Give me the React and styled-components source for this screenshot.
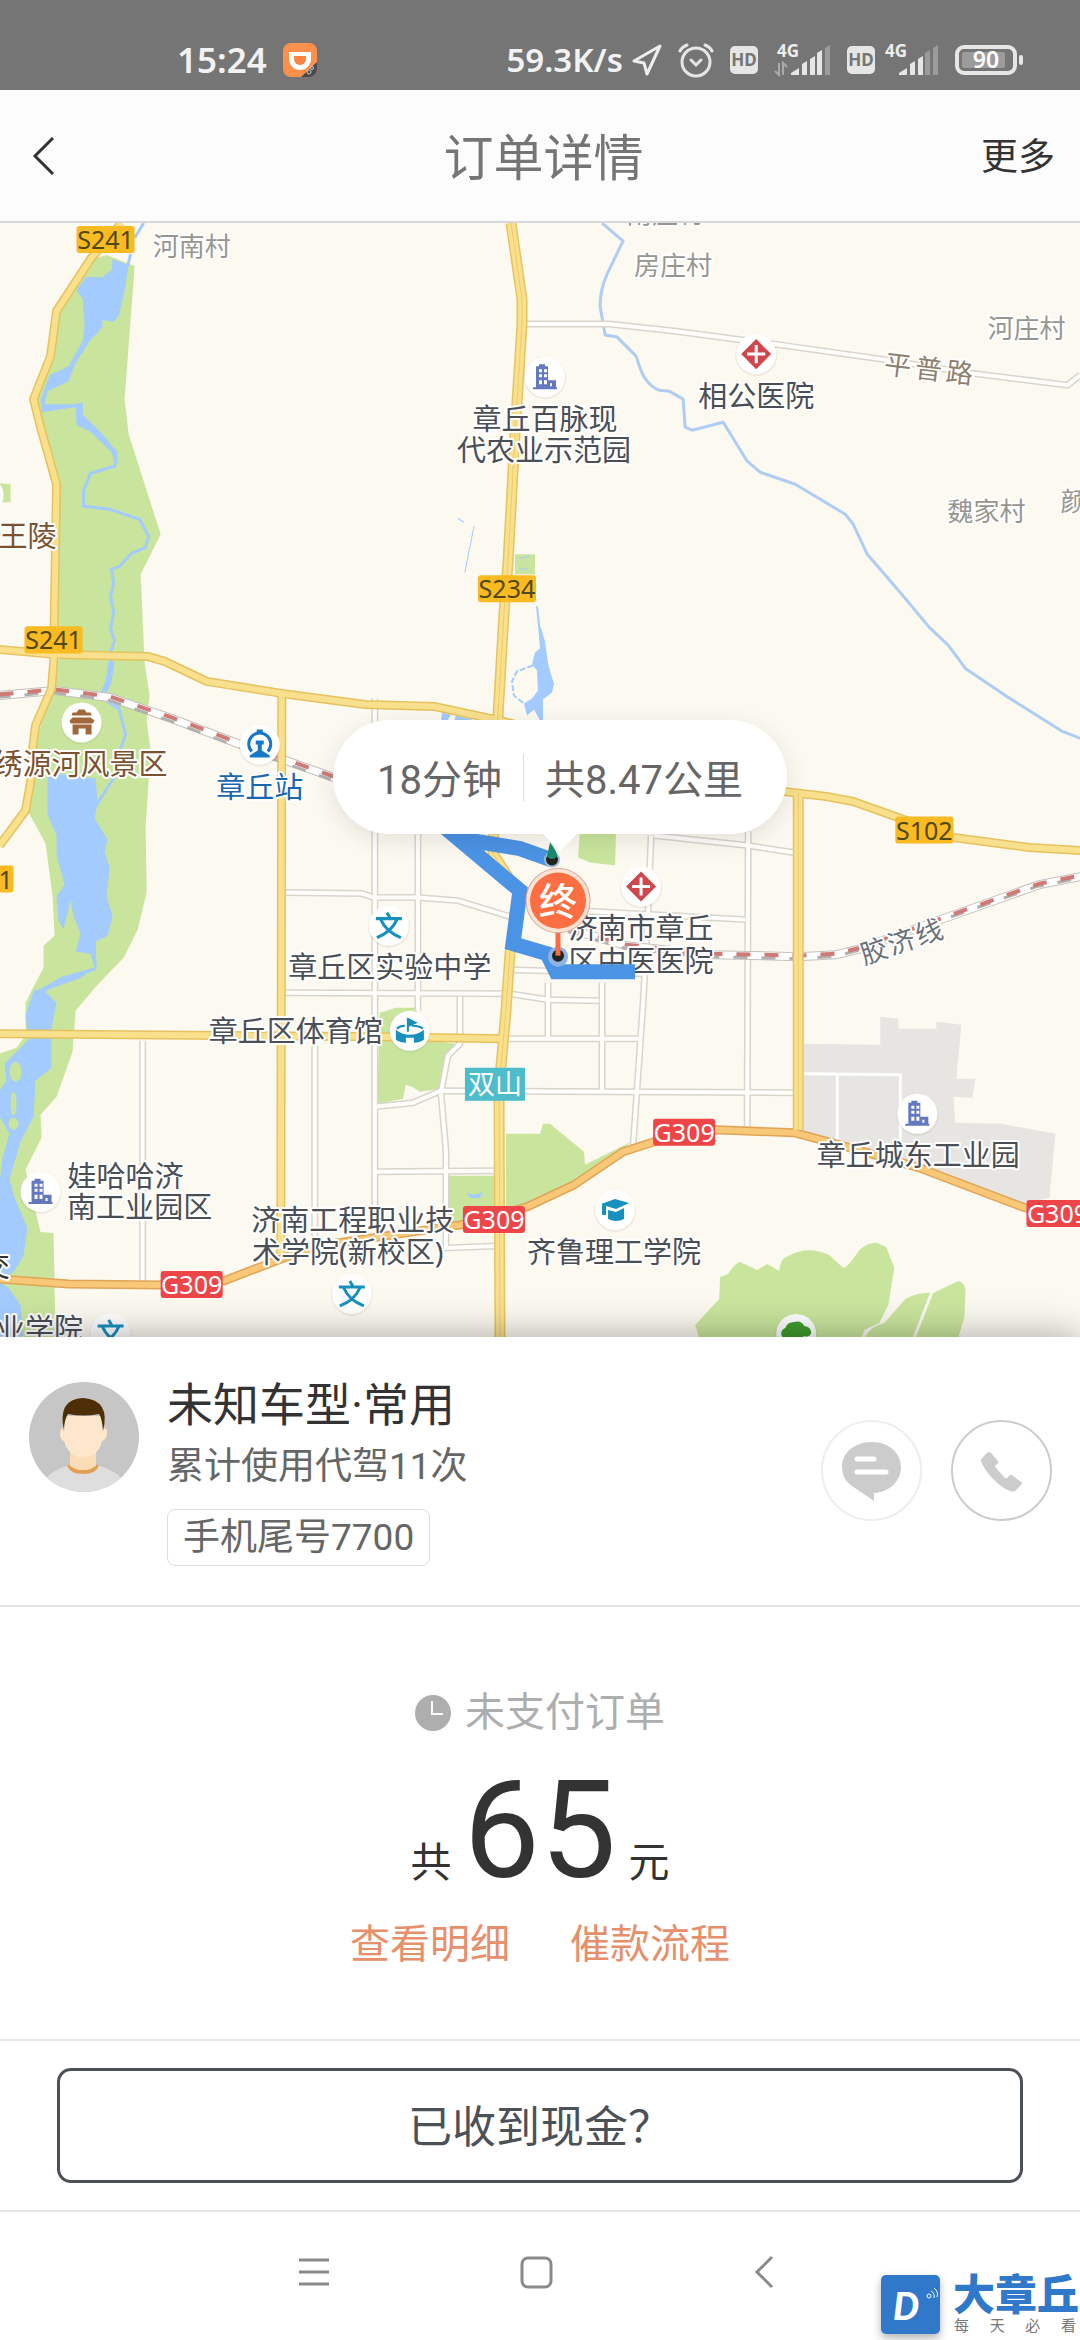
import React from "react";
import styled, { createGlobalStyle } from "styled-components";

const GlobalStyle = createGlobalStyle`
  * {
    box-sizing: border-box;
  }
  body {
    margin: 0;
    background: #fff;
    color: #333;
    font-family: Roboto, "Noto Sans CJK SC", sans-serif;
  }
  button {
    padding: 0;
    border: 0;
    background: none;
    color: inherit;
    font-family: inherit;
    cursor: pointer;
  }
  svg {
    display: block;
    flex: none;
  }
`;

const Page = styled.div`
  display: flex;
  flex-direction: column;
  min-height: 100vh;
  position: relative;
  overflow: hidden;
`;

const StatusBar = styled.div`
  display: flex;
  align-items: center;
  height: 90px;
  padding: 30px 57px 0 177px;
  background: #757575;
  color: #f2f2f2;
  font-family: "Noto Sans", sans-serif;
  font-size: 35px;
  font-weight: 600;
  line-height: 40px;
`;

const StatusIcons = styled.div`
  display: flex;
  align-items: center;
  gap: 16px;
  margin-left: auto;
  font-size: 33px;
`;

const Speed = styled.div`
  display: flex;
  align-items: center;
  gap: 9px;
`;

const Network = styled.div`
  display: flex;
  align-items: center;
  gap: 10px;
`;

const Time = styled.span`
  margin-right: 16px;
`;

const Header = styled.header`
  display: grid;
  grid-template-columns: 1fr auto 1fr;
  align-items: center;
  height: 133px;
  padding: 0 25px 0 32px;
  background: #fcfcfd;
  border-bottom: 2px solid #d6d8da;
`;

const Title = styled.h1`
  margin: 0;
  padding-top: 6px;
  color: #757575;
  font-size: 50px;
  font-weight: 400;
  line-height: 60px;
`;

const BackButton = styled.button`
  justify-self: start;
`;

const MoreButton = styled.button`
  justify-self: end;
  padding-top: 4px;
  font-size: 37px;
  line-height: 60px;
`;

const MapArea = styled.section`
  position: relative;
  flex: 1;
  min-height: 600px;
  overflow: hidden;
  background: #fcf9f1;
`;

const MapSvg = styled.svg`
  position: absolute;
  inset: 0;
  width: 100%;
  height: 100%;
`;

const MapText = styled.text`
  font-family: "Noto Sans", "Noto Sans CJK SC", sans-serif;
  font-size: ${(p) => p.$size || 29}px;
  fill: ${(p) => p.$color || "#4a4e55"};
  stroke: #fff;
  stroke-width: ${(p) => (p.$plain ? 0 : 4)}px;
  stroke-linejoin: round;
  paint-order: stroke;
`;

const TripBubble = styled.div`
  position: absolute;
  top: 497px;
  left: 333px;
  display: flex;
  align-items: center;
  gap: 21px;
  height: 114px;
  padding: 0 44px;
  border-radius: 57px;
  background: #fff;
  box-shadow: 0 6px 24px rgba(0, 0, 0, 0.1);
  color: #666;
  font-size: 40px;
  white-space: nowrap;
  &::after {
    content: "";
    position: absolute;
    top: 113px;
    left: 209px;
    border: 18px solid transparent;
    border-top-color: #fff;
    border-bottom: 0;
  }
`;

const BubbleLine = styled.i`
  width: 1px;
  height: 47px;
  background: #ddd;
`;

const Customer = styled.section`
  position: relative;
  display: flex;
  align-items: center;
  padding: 38px 28px 39px 29px;
  background: #fff;
  border-bottom: 2px solid #e3e3e3;
  box-shadow: 0 0 36px rgba(0, 0, 0, 0.35);
`;

const AvatarBox = styled.div`
  align-self: flex-start;
  margin: 7px 28px 0 0;
`;

const CustomerInfo = styled.div`
  flex: 1;
`;

const Name = styled.h2`
  margin: 0;
  font-size: 46px;
  font-weight: 400;
  line-height: 60px;
`;

const Usage = styled.p`
  margin: 0;
  color: #666;
  font-size: 37px;
  line-height: 64px;
`;

const PhoneTag = styled.span`
  display: inline-block;
  margin-top: 10px;
  padding: 0 15px;
  border: 1px solid #ddd;
  border-radius: 8px;
  color: #666;
  font-size: 37px;
  line-height: 55px;
  vertical-align: top;
`;

const Contacts = styled.div`
  display: flex;
  gap: 29px;
`;

const RoundButton = styled.button`
  width: 101px;
  height: 101px;
  border: 2px solid ${(p) => p.$line};
  border-radius: 50%;
`;

const Fare = styled.section`
  position: relative;
  display: flex;
  flex-direction: column;
  align-items: center;
  padding: 76px 0 64px;
  background: #fff;
  border-bottom: 2px solid #e6e6e6;
`;

const PayState = styled.div`
  display: flex;
  align-items: center;
  gap: 14px;
  color: #aeaeae;
  font-size: 40px;
  line-height: 60px;
`;

const Amount = styled.div`
  display: flex;
  align-items: baseline;
  gap: 12px;
  height: 120px;
  margin: 28px 0 24px;
  font-size: 41px;
  line-height: 41px;
  strong {
    font-size: 136px;
    font-weight: 400;
    line-height: 120px;
  }
`;

const Links = styled.nav`
  display: flex;
  gap: 60px;
  font-size: 40px;
  line-height: 60px;
  a {
    color: #e78f6b;
    text-decoration: none;
  }
`;

const CashBar = styled.div`
  position: relative;
  padding: 27px 57px;
  background: #fff;
  border-bottom: 2px solid #e6e6e6;
`;

const CashButton = styled.button`
  width: 100%;
  height: 115px;
  padding-bottom: 4px;
  border: 3px solid #4c5158;
  border-radius: 14px;
  color: #4c5158;
  font-size: 44px;
`;

const NavBar = styled.nav`
  display: flex;
  align-items: center;
  justify-content: center;
  gap: 188px;
  height: 128px;
  padding: 0 8px 8px 0;
`;

const Watermark = styled.div`
  position: absolute;
  right: 1px;
  bottom: 5px;
  display: flex;
  align-items: center;
  gap: 13px;
`;

const WatermarkLogo = styled.div`
  border-radius: 5px;
  background: #2f78ca;
  box-shadow: 0 4px 8px rgba(0, 0, 0, 0.3);
`;

const WatermarkName = styled.div`
  color: #2f78ca;
  font-size: 42px;
  font-weight: 900;
  line-height: 43px;
`;

const WatermarkSlogan = styled.div`
  display: flex;
  justify-content: space-between;
  padding: 0 3px 0 1px;
  color: #777;
  font-size: 15px;
  line-height: 18px;
`;

/* ---------- status icons ---------- */

const AppIcon = () => (
  <svg width="34" height="34" viewBox="0 0 34 34">
    <rect width="34" height="34" rx="8" fill="#fb8f4c" />
    <path d="M34 19V26a8 8 0 0 1-8 8H18z" fill="#4b4a4e" />
    <path d="M6 9h22v7a11 11 0 0 1-22 0z" fill="#fff" />
    <path d="M11 13h12v3a6 6 0 0 1-12 0z" fill="#fb8442" />
    <circle cx="26" cy="29" r="2" fill="none" stroke="#ccc" />
    <circle cx="29" cy="25" r="1.5" fill="none" stroke="#ccc" />
  </svg>
);

const LocateIcon = () => (
  <svg width="30" height="32" viewBox="0 0 30 32">
    <path d="M28 2L2 17l10 2 3 11z" fill="none" stroke="#eee" strokeWidth="3" strokeLinejoin="round" />
  </svg>
);

const AlarmIcon = () => (
  <svg width="36" height="36" viewBox="0 0 36 36" fill="none" stroke="#e6e6e6" strokeWidth="3" strokeLinecap="round">
    <circle cx="18" cy="20" r="14" />
    <path d="M13 18l5 5 5-5M2 9Q4 5 9 3M34 9Q32 5 27 3" />
  </svg>
);

const HdIcon = () => (
  <svg width="28" height="28" viewBox="0 0 28 28">
    <rect width="28" height="28" rx="5" fill="#e6e6e6" />
    <text x="14" y="20" textAnchor="middle" fontSize="17" fontWeight="700" fill="#757575">HD</text>
  </svg>
);

const Signal = ({ level, arrows }) => (
  <svg width={arrows ? 63 : 54} height="34" viewBox={arrows ? "-6 0 63 34" : "3 0 54 34"}>
    <text x="3" y="14" fontSize="17" fontWeight="700" fill="#eee">4G</text>
    {arrows && <path d="M5 20V32L1 28M9 32V20L13 24" fill="none" stroke="#aaa" strokeWidth="2" />}
    <path d="M17 32v-2l8-5v7z" fill="#e6e6e6" />
    {[20, 15, 9, 4].map((top, i) => (
      <path key={top} d={`M${28 + i * 8 - (i > 1 ? 1 : 0)} 32V${top + 1}l5-3V32z`} fill={i < level ? "#e6e6e6" : "#9b9b9b"} />
    ))}
  </svg>
);

const Battery = () => (
  <svg width="68" height="30" viewBox="0 0 68 30">
    <rect x="2" y="2" width="58" height="26" rx="7" fill="none" stroke="#e6e6e6" strokeWidth="4" />
    <rect x="7" y="7" width="43" height="16" rx="2" fill="#9b9b9b" />
    <text x="31" y="23" textAnchor="middle" fontSize="23" fontWeight="600" fill="#fff">90</text>
    <rect x="64" y="10" width="4" height="10" rx="2" fill="#e6e6e6" />
  </svg>
);

/* ---------- map ---------- */

const majorRoads = [
  "M122 223L91 259L57 311L51 356L34 399L41 427L57 484L54 663L52 688L36 725L33 749L31 782L26 810L0 845",
  "M0 649L55 654L148 656L165 661L207 681L282 693L365 704L434 706L499 720L784 791L826 796L853 801L895 816L953 837L1029 847L1080 850",
  "M282 693L281 1253",
  "M0 1033L379 1036L503 1038",
];

const wideRoads = [
  "M511 223L522 299V324L515 434L508 563L504 613L498 716L493 853L520 895L510 953L506 1010L499 1088L500 1336",
  "M798 792V1129",
];

const highway =
  "M0 1278L69 1283L162 1284L224 1280L289 1255L331 1243L461 1224L527 1206L574 1184L623 1151L654 1141L716 1129L795 1132L850 1147L919 1167L1022 1206L1080 1222";

const minorRoads = [
  "M525 324H609L674 331L781 345L881 359L970 373L1067 385L1080 375",
  "M375 698V1215",
  "M418 834V1010",
  "M143 1040V1280",
  "M315 1045V1245",
  "M286 892L362 893L374 897L418 897L458 900L510 916",
  "M286 992L510 993L548 999L599 1000",
  "M375 1106L413 1102L441 1090L793 1092",
  "M460 996V1043L448 1055L441 1092L446 1149V1247L496 1245",
  "M375 1171L496 1170",
  "M510 969L643 973",
  "M651 835L648 912L643 1002L633 1145",
  "M748 831L747 1129",
  "M548 982V1038",
  "M602 982V1090",
  "M503 1038H640",
  "M654 835L748 845L793 852",
  "M574 910L688 916L747 919",
];

const yardRoads = ["M803 1073L900 1074V1145", "M837 1074V1140"];

const greens = [
  "M90 260L107 255L135 266L125 399L129 434L161 534L141 574L145 663L150 695L147 720L151 750L146 827L147 892L138 929L124 957L98 984L76 1010L73 1051L57 1096L41 1114L42 1137L26 1169L41 1231L54 1232L56 1336H0V1053L17 1047L26 1035V1002L34 986L44 967V945L55 935L53 896L46 843L29 812L34 749L52 688L59 659L57 484L38 409L36 399L55 356L59 313z",
  "M506 1133H540L543 1123H550L584 1151L585 1164L633 1140L574 1184L506 1211z",
  "M449 1175H496V1225H449z",
  "M380 1012L396 1007H417L418 1037L455 1043L444 1063L441 1088L420 1091L412 1086L406 1084L403 1098L377 1103z",
  "M580 830H616L615 865L590 862L578 857z",
  "M515 554H535V574H515z",
  "M0 483L11 484V502H0z",
  "M695 1324L719 1298L720 1276L728 1273Q735 1262 740 1261L757 1269L767 1263L779 1270Q780 1257 788 1255Q808 1244 829 1254L843 1267Q848 1266 859 1249Q869 1241 877 1242L886 1246L894 1267L888 1304L879 1322L864 1329L860 1340H700z",
  "M864 1340Q867 1326 884 1322L905 1298Q918 1291 933 1292L958 1280Q966 1282 965 1292L964 1316L957 1340z",
];

const waters = [
  "M113 259L129 265L125 291L119 316L114 322L103 320V327L90 341L76 363L69 381L48 391L45 404H76L83 402L84 415L103 434L115 449V466L112 452L90 431L77 425L76 407L42 412L41 399L50 375L69 366L83 341L85 324L83 299L77 290L86 277H103L112 270z",
  "M48 772L96 778L98 802L95 818L108 839L105 851L110 867L107 896L113 916L108 935L96 941L97 967L79 978L45 990L57 1002L52 1027V1067L36 1080L34 1116L21 1141L10 1178L14 1194L28 1227L24 1255L14 1271L0 1280V1182L3 1157L10 1133L0 1116V1090L7 1080L5 1063L17 1051L29 1039L26 1014L34 990L41 988L62 976L95 967L91 953L76 951L81 933L74 916L71 900L64 929L59 920L57 896L65 884L57 855V835L48 814z",
  "M0 1280L10 1288L21 1304L23 1336H0z",
  "M536 606L538 606L540 625L545 641L548 663L551 674L554 683L552 692L543 699L543 720H540L534 709L527 715L524 703L532 698L538 690L537 670L532 664L535 652L540 648L538 625z",
  "M442 712L451 714L447 721H441zM456 715L472 719V721H454z",
  "M467 1192Q474 1196 483 1191L480 1197H470z",
];

const railway = ["M0 695L55 690L110 697L172 718L238 743L289 761L334 777", "M571 929L626 945L712 954L798 956L836 954L860 948L943 918L1039 884L1080 876"];

const labels = [
  { t: "南庄村", x: 665, y: 223, village: true },
  { t: "河南村", x: 192, y: 256, village: true },
  { t: "房庄村", x: 673, y: 275, village: true },
  { t: "河庄村", x: 1026, y: 338, village: true },
  { t: "魏家村", x: 986, y: 521, village: true },
  { t: "颜", x: 1073, y: 511, village: true },
  { t: "章丘百脉现", x: 545, y: 430 },
  { t: "代农业示范园", x: 544, y: 461 },
  { t: "相公医院", x: 756, y: 407 },
  { t: "王陵", x: 28, y: 547, color: "#7b5130" },
  { t: "绣源河风景区", x: 81, y: 775, color: "#7b5130" },
  { t: "章丘站", x: 260, y: 797, color: "#1a66ae" },
  { t: "章丘区实验中学", x: 390, y: 977 },
  { t: "章丘区体育馆", x: 296, y: 1041 },
  { t: "济南市章丘", x: 641, y: 938 },
  { t: "区中医医院", x: 641, y: 971 },
  { t: "娃哈哈济", x: 126, y: 1186 },
  { t: "南工业园区", x: 140, y: 1217 },
  { t: "济南工程职业技", x: 353, y: 1230 },
  { t: "术学院(新校区)", x: 348, y: 1262 },
  { t: "齐鲁理工学院", x: 614, y: 1262 },
  { t: "章丘城东工业园", x: 918, y: 1165 },
  { t: "交", x: -4, y: 1276, color: "#333" },
  { t: "业学院", x: 40, y: 1339 },
];

const badges = [
  { t: "S241", x: 106, y: 240 },
  { t: "S241", x: 54, y: 640 },
  { t: "S234", x: 507, y: 589 },
  { t: "S102", x: 924, y: 830 },
  { t: "S241", x: -15, y: 879 },
  { t: "G309", x: 192, y: 1284 },
  { t: "G309", x: 494, y: 1219 },
  { t: "G309", x: 684, y: 1132 },
  { t: "G309", x: 1057, y: 1213 },
];

const Building = () => (
  <path fillRule="evenodd" fill="#6478c0" d="M-9-11h3v-2h6v2h3V3h8v7h1v2h-24v-2h3zM-6-8v3h3v-3zm5 0v3h3v-3zM-6-3v3h3v-3zm5 0v3h3v-3zM-6 3v4h3V3zm5 0v4h3V3zm6 3v3h2V6z" />
);

const Wen = () => (
  <path d="M-2-13L1-8M-13-7H13M-8-6Q-3 6 12 12M8-6Q3 6-12 12" fill="none" stroke="#1790bd" strokeWidth="3" />
);

const Hospital = () => (
  <g>
    <path d="M0-15L15 0 0 15-15 0z" fill="#cf474c" />
    <path d="M0-9V9M-9 0H9" stroke="#fff" strokeWidth="3" />
  </g>
);

const places = [
  { x: 545, y: 377, icon: <Building /> },
  { x: 41, y: 1191, icon: <Building /> },
  { x: 917, y: 1113, icon: <Building /> },
  { x: 756, y: 354, icon: <Hospital /> },
  { x: 641, y: 886, icon: <Hospital /> },
  { x: 389, y: 925, icon: <Wen /> },
  { x: 352, y: 1293, icon: <Wen /> },
  { x: 111, y: 1332, icon: <Wen /> },
  {
    x: 82,
    y: 722,
    icon: <path d="M-9-10h4l2-3h6l2 3h4l1 3h-20zM-12-2l3-3h18l4 3-2 3h-22zM-9 2H10V12H4V6H-3v6h-6z" fill="#a2683b" />,
  },
  {
    x: 260,
    y: 744,
    icon: (
      <g fill="#1878c8">
        <path d="M-8 7A11 11 0 1 1 8 7" fill="none" stroke="#1878c8" strokeWidth="3" />
        <path d="M-3-15h6v3h-6zM-4-4H4V0H2V6l8 5v2h-20v-2l8-5V0h-2z" />
      </g>
    ),
  },
  {
    x: 410,
    y: 1030,
    icon: (
      <g fill="#1790bd">
        <path d="M-2-13L8-8-1-4V1H-3V-13z" />
        <path d="M-14-1V9Q-10 12-4 12V7H4v5Q10 12 14 9V-1Q8 4 0 4T-14-1z" />
        <path d="M-13-2Q-10-5-5-5M2-5Q10-5 13-2" fill="none" stroke="#1790bd" strokeWidth="2" />
      </g>
    ),
  },
  {
    x: 615,
    y: 1209,
    icon: <path d="M-14-6L0-11 14-7 1-1-9-4V5h-4V-6zM-7 0L1 2 9-2V9Q1 13-7 9z" fill="#1790bd" />,
  },
  {
    x: 796,
    y: 1333,
    icon: <path d="M-14 3Q-17-3-11-6-9-12-2-12 5-14 8-8 15-7 15-1 13 4 8 2L4 5 3 12h-6L-2 6-8 4z" fill="#3f9c2c" />,
  },
];

const DistrictMap = () => (
  <MapSvg viewBox="0 223 1080 1113" preserveAspectRatio="xMidYMid slice" fill="none">
    {greens.map((d) => <path key={d} d={d} fill="#c9e59d" />)}
    {waters.map((d) => <path key={d} d={d} fill="#a3cbfe" />)}
    <g fill="#c9e59d">
      <ellipse cx="16" cy="1071" rx="6" ry="10" />
      <ellipse cx="14" cy="1103" rx="3" ry="12" />
      <ellipse cx="14" cy="1123" rx="5" ry="6" />
    </g>
    <path
      d="M803 1043L880 1044V1016L898 1018V1028H936V1021L961 1024L956 1078H975L972 1097L953 1096L955 1122L1001 1123L1055 1133L1049 1197L1022 1202L919 1167L803 1132z"
      fill="#e6e5e2"
    />
    <g stroke="#a3cbfe" strokeWidth="3">
      <path d="M144 223L135 238M131 254L128 266M115 449Q118 458 115 466L91 473L84 490V506L110 509L140 519L149 536L146 547L132 553L120 566L112 569L114 583L111 596L114 612L111 629L115 640L111 652V665" />
      <path d="M119 707L126 734L117 760M117 773L96 806M45 990L62 978L96 968" />
      <path d="M112 661L109 681L103 695L119 707" strokeWidth="6" />
      <path d="M533 665L517 671L512 681L514 695L524 703" strokeWidth="2" strokeDasharray="6 2" />
      <path d="M458 518L464 522M474 526L465 572M519 558L530 556M519 568L528 569" strokeWidth="1" />
    </g>
    <path
      d="M602 223L623 241L607 274Q600 290 600 306L605 335L617 337L636 356L640 368Q646 385 659 390L669 391L683 399L685 427L692 430L723 422L747 461L760 472L795 484L845 514L853 524L867 554L898 590L929 627L948 645L965 668L1008 697L1062 731L1080 738"
      stroke="#afcdf3"
      strokeWidth="3"
      strokeLinejoin="round"
    />
    <path d="M932 1290L914 1336" stroke="#fcf9f1" strokeWidth="3" />

    {minorRoads.map((d) => <path key={d} d={d} stroke="#d8d5cd" strokeWidth="7" />)}
    {minorRoads.map((d) => <path key={d} d={d} stroke="#fffefb" strokeWidth="4" />)}
    {yardRoads.map((d) => <path key={d} d={d} stroke="#fff" strokeWidth="3" />)}

    {railway.map((d) => (
      <g key={d}>
        <path d={d} stroke="#c4c1bd" strokeWidth="9" />
        <path d={d} stroke="#fff" strokeWidth="7" />
        <g strokeWidth="4" strokeDasharray="14 14">
          <path d={d} stroke="#b2b0ae" strokeWidth="3" transform="translate(-3 2)" />
          <path d={d} stroke="#cf7a77" transform="translate(0 -1)" />
        </g>
      </g>
    ))}

    <g strokeLinejoin="round">
      <path d={highway} stroke="#dfa455" strokeWidth="9" />
      <path d={highway} stroke="#f8c878" strokeWidth="6" />
      {majorRoads.map((d) => <path key={d} d={d} stroke="#e6c25e" strokeWidth="9" />)}
      {wideRoads.map((d) => <path key={d} d={d} stroke="#e6c460" strokeWidth="11" />)}
      {majorRoads.map((d) => <path key={d} d={d} stroke="#f9e08d" strokeWidth="6" />)}
      {wideRoads.map((d) => <path key={d} d={d} stroke="#f9e08d" strokeWidth="8" />)}
      {wideRoads.map((d) => <path key={d} d={d} stroke="#eccd6c" strokeWidth="1" />)}
    </g>

    {places.map((p) => (
      <g key={`${p.x}-${p.y}`} transform={`translate(${p.x} ${p.y})`}>
        <circle cy="1" r="21" fill="#8c8468" opacity=".12" />
        <circle r="20" fill="#fff" />
        {p.icon}
      </g>
    ))}
    <circle cx="-14" cy="495" r="18" fill="#fff" />

    {labels.map((l) => (
      <MapText
        key={l.t}
        x={l.x}
        y={l.y}
        textAnchor="middle"
        $size={l.village ? 26 : 29}
        $color={l.village ? "#96968f" : l.color}
      >
        {l.t}
      </MapText>
    ))}
    <MapText x="883 914 945" y="373" transform="rotate(7 883 373)" $size={27} $color="#8f7f6e">平普路</MapText>
    <MapText x="864 893 922" y="964" transform="rotate(-19 864 964)" $size={27} $color="#6c7178">胶济线</MapText>

    {badges.map((b) => {
      const national = b.t[0] === "G";
      return (
        <g key={`${b.x}-${b.y}`}>
          <rect
            x={b.x - (national ? 31 : 29)}
            y={b.y - 14}
            width={national ? 62 : 58}
            height="27"
            rx="3"
            fill={national ? "#ee4648" : "#fabb22"}
          />
          <MapText $plain x={b.x} y={b.y + 9} textAnchor="middle" $size={25} $color={national ? "#fff" : "#504817"}>
            {b.t}
          </MapText>
        </g>
      );
    })}
    <rect x="465" y="1067" width="60" height="33" fill="#4dbccb" />
    <MapText $plain x="495" y="1093" textAnchor="middle" $size={27} $color="#fff">双山</MapText>

    {/* driven route */}
    <path d="M551 859L520 848L458 838L520 890L513 943L547 953L556 971H635" stroke="#4b93e4" strokeWidth="15" strokeLinejoin="miter" />
    <circle cx="552" cy="859" r="8" fill="#9fb9d5" />
    <circle cx="552" cy="859" r="6" fill="#222" />
    <path d="M550 842Q558 852 557 856Q552 861 547 856z" fill="#1a8a6b" />
    <circle cx="558" cy="956" r="10" fill="#8db4e2" />
    <circle cx="558" cy="955" r="6" fill="#222" />
    <path d="M558 930V955" stroke="#f96b40" strokeWidth="5" />
    <circle cx="558" cy="900" r="32" fill="#fbe3d6" stroke="#d9a893" strokeWidth="1" />
    <circle cx="558" cy="900" r="28" fill="#fb6f42" />
    <MapText $plain x="558" y="914" textAnchor="middle" $size={38} $color="#fff" fontWeight="500">终</MapText>
  </MapSvg>
);

/* ---------- order card ---------- */

const Avatar = () => (
  <svg width="110" height="110" viewBox="0 0 110 110">
    <defs>
      <clipPath id="face">
        <circle cx="55" cy="55" r="55" />
      </clipPath>
    </defs>
    <g clipPath="url(#face)">
      <rect width="110" height="110" fill="#c6c6c6" />
      <path d="M10 112Q12 92 38 84H71Q97 92 100 112z" fill="#dedede" />
      <path d="M40 83Q42 90 54 90T68 83" fill="#fbd9ae" stroke="#e3a055" strokeWidth="4" />
      <path d="M41 66H67V84Q54 92 41 84z" fill="#fbdcb5" />
      <path d="M34 34H75V46Q79 46 78 52T73 59Q70 74 54 76 39 74 35 59 31 58 31 52T34 46z" fill="#fde6cb" />
      <path d="M35 49Q28 17 54 16 82 18 74 49 73 36 70 32 54 35 39 32 35 38 35 49z" fill="#4d2e06" />
    </g>
  </svg>
);

const MessageIcon = () => (
  <svg width="97" height="97" viewBox="2 2 97 97">
    <path d="M51 22C68 22 80 33 80 47S69 72 53 73V81L31 66C24 61 21 54 21 47 21 33 33 22 51 22z" fill="#ccc" />
    <path d="M36 39H53M36 52H65" stroke="#fff" strokeWidth="5" strokeLinecap="round" />
  </svg>
);

const PhoneIcon = () => (
  <svg width="97" height="97" viewBox="2 2 97 97">
    <path d="M36 33Q38 31 40 33L47 41Q48 43 46 44 43 46 45 48L54 58Q56 59 57 57 59 54 61 55L70 62Q72 63 70 65L64 71Q62 72 59 71 51 68 42 59 32 48 30 41 30 39 31 38z" fill="#ccc" />
  </svg>
);

const ClockIcon = () => (
  <svg width="36" height="36" viewBox="0 0 36 36">
    <circle cx="18" cy="18" r="18" fill="#aeaeae" />
    <path d="M17 6V19H28" fill="none" stroke="#fff" strokeWidth="2" />
  </svg>
);

export default function App() {
  return (
    <>
      <GlobalStyle />
      <Page>
        <StatusBar>
          <Time>15:24</Time>
          <AppIcon />
          <StatusIcons>
            <Speed>
              <span>59.3K/s</span>
              <LocateIcon />
            </Speed>
            <AlarmIcon />
            <Network>
              <HdIcon />
              <Signal level={3} arrows />
            </Network>
            <Network>
              <HdIcon />
              <Signal level={2} />
            </Network>
            <Battery />
          </StatusIcons>
        </StatusBar>

        <Header>
          <BackButton aria-label="返回">
            <svg width="24" height="40" viewBox="0 0 24 40">
              <path d="M21 2L3 20 21 38" fill="none" stroke="#333" strokeWidth="3" />
            </svg>
          </BackButton>
          <Title>订单详情</Title>
          <MoreButton>更多</MoreButton>
        </Header>

        <MapArea>
          <DistrictMap />
          <TripBubble>
            <span>18分钟</span>
            <BubbleLine />
            <span>共8.47公里</span>
          </TripBubble>
        </MapArea>

        <Customer>
          <AvatarBox>
            <Avatar />
          </AvatarBox>
          <CustomerInfo>
            <Name>未知车型·常用</Name>
            <Usage>累计使用代驾11次</Usage>
            <PhoneTag>手机尾号7700</PhoneTag>
          </CustomerInfo>
          <Contacts>
            <RoundButton $line="#eee" aria-label="发消息">
              <MessageIcon />
            </RoundButton>
            <RoundButton $line="#ccc" aria-label="打电话">
              <PhoneIcon />
            </RoundButton>
          </Contacts>
        </Customer>

        <Fare>
          <PayState>
            <ClockIcon />
            未支付订单
          </PayState>
          <Amount>
            <span>共</span>
            <strong>65</strong>
            <span>元</span>
          </Amount>
          <Links>
            <a href="#detail">查看明细</a>
            <a href="#process">催款流程</a>
          </Links>
        </Fare>

        <CashBar>
          <CashButton>已收到现金？</CashButton>
        </CashBar>

        <NavBar>
          <button aria-label="最近任务">
            <svg width="34" height="34" viewBox="0 0 34 34">
              <path d="M2 5H32M2 17H32M2 29H32" stroke="#8a8a8a" strokeWidth="3" />
            </svg>
          </button>
          <button aria-label="主屏幕">
            <svg width="34" height="34" viewBox="0 0 34 34">
              <rect x="3" y="3" width="29" height="29" rx="6" fill="none" stroke="#8a8a8a" strokeWidth="3" />
            </svg>
          </button>
          <button aria-label="后退">
            <svg width="34" height="34" viewBox="0 0 34 34">
              <path d="M31 2L16 17 31 32" fill="none" stroke="#8a8a8a" strokeWidth="3" />
            </svg>
          </button>
        </NavBar>

        <Watermark>
          <WatermarkLogo>
            <svg width="59" height="59" viewBox="0 0 59 59">
              <text x="12" y="45" fontFamily="Lato" fontSize="37" fontWeight="900" fontStyle="italic" fill="#fff">D</text>
              <g fill="none" stroke="#fff">
                <circle cx="48" cy="21" r="2" />
                <path d="M50 16Q54 18 53 23M53 13Q58 17 56 22" />
              </g>
            </svg>
          </WatermarkLogo>
          <div>
            <WatermarkName>大章丘</WatermarkName>
            <WatermarkSlogan>
              <span>每</span>
              <span>天</span>
              <span>必</span>
              <span>看</span>
            </WatermarkSlogan>
          </div>
        </Watermark>
      </Page>
    </>
  );
}
